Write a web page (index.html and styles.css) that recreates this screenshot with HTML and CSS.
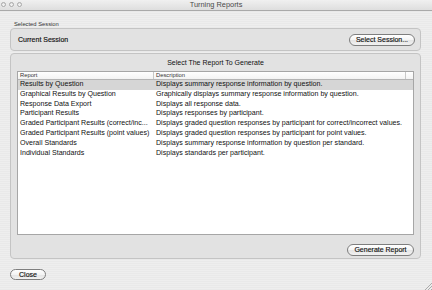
FILE: index.html
```html
<!DOCTYPE html>
<html>
<head>
<meta charset="utf-8">
<link rel="stylesheet" href="styles.css">
</head>
<body>
<div class="window">
  <div class="titlebar">
    <div class="lights">
      <span class="light"></span><span class="light"></span><span class="light"></span>
    </div>
    <div class="title">Turning Reports</div>
  </div>
  <div class="content">
    <div class="group-label">Selected Session</div>
    <div class="box session-box">
      <span class="session-name">Current Session</span>
      <button class="btn">Select Session...</button>
    </div>
    <div class="box report-box">
      <div class="box-title">Select The Report To Generate</div>
      <div class="table">
        <div class="thead">
          <div class="th col-report">Report</div>
          <div class="th col-desc">Description</div>
          <div class="th col-corner"></div>
        </div>
        <div class="tbody">
          <div class="row selected"><div class="col-report">Results by Question</div><div class="col-desc">Displays summary response information by question.</div></div>
          <div class="row"><div class="col-report">Graphical Results by Question</div><div class="col-desc">Graphically displays summary response information by question.</div></div>
          <div class="row"><div class="col-report">Response Data Export</div><div class="col-desc">Displays all response data.</div></div>
          <div class="row"><div class="col-report">Participant Results</div><div class="col-desc">Displays responses by participant.</div></div>
          <div class="row"><div class="col-report">Graded Participant Results (correct/inc...</div><div class="col-desc">Displays graded question responses by participant for correct/incorrect values.</div></div>
          <div class="row"><div class="col-report">Graded Participant Results (point values)</div><div class="col-desc">Displays graded question responses by participant for point values.</div></div>
          <div class="row"><div class="col-report">Overall Standards</div><div class="col-desc">Displays summary response information by question per standard.</div></div>
          <div class="row"><div class="col-report">Individual Standards</div><div class="col-desc">Displays standards per participant.</div></div>
        </div>
      </div>
      <div class="box-footer">
        <button class="btn">Generate Report</button>
      </div>
    </div>
    <div class="footer">
      <button class="btn btn-close">Close</button>
    </div>
  </div>
  <svg class="grip" width="8" height="8" viewBox="0 0 8 8">
    <path d="M8 1 L1 8 M8 4 L4 8 M8 7 L7 8" stroke="#9a9a9a" stroke-width="0.8"/>
  </svg>
</div>
</body>
</html>
```
FILE: styles.css
```css
* { box-sizing: border-box; }
html, body { margin: 0; padding: 0; }
body {
  font-family: "Liberation Sans", Arial, sans-serif;
  color: #111;
  background: #ececec;
  -webkit-font-smoothing: antialiased;
}
.window {
  position: relative;
  width: 432px;
  height: 290px;
  overflow: hidden;
  opacity: 0.999;
  background: repeating-linear-gradient(to bottom, #eeeeee 0, #eeeeee 1px, #e9e9e9 1px, #e9e9e9 2px);
  display: flex;
  flex-direction: column;
}
.titlebar {
  position: relative;
  height: 11px;
  border-bottom: 1px solid #a9a9a9;
  background: linear-gradient(to bottom, #f0f0f0, #dedede);
  display: flex;
  align-items: center;
  justify-content: center;
}
.lights {
  position: absolute;
  left: 1px;
  top: 2px;
  display: flex;
  gap: 3px;
}
.light {
  width: 5px;
  height: 5px;
  border-radius: 50%;
  border: 1px solid #a8a8a8;
  background: linear-gradient(to bottom, #e2e2e2, #fafafa);
}
.title {
  font-size: 7.4px;
  line-height: 10px;
  color: #4a4a4a;
}
.content {
  flex: 1;
  display: flex;
  flex-direction: column;
  padding: 0 11px 0 10px;
}
.group-label {
  margin-top: 9px;
  padding-left: 4px;
  font-size: 5.8px;
  line-height: 8px;
  color: #333;
}
.box {
  border: 1px solid #c4c4c4;
  border-radius: 4px;
  background: #e2e2e2;
}
.session-box {
  height: 23px;
  display: flex;
  align-items: center;
  justify-content: space-between;
  padding: 0 5px 0 7px;
}
.session-name {
  font-size: 7px;
  color: #111;
  -webkit-text-stroke: 0.15px #111;
}
.btn {
  font-family: "Liberation Sans", Arial, sans-serif;
  font-size: 7px;
  color: #111;
  height: 12px;
  padding: 0 6px;
  border: 1px solid #7e7e7e;
  border-radius: 6px;
  background: linear-gradient(to bottom, #ffffff 0%, #f4f4f4 50%, #e4e4e4 51%, #f2f2f2 100%);
  line-height: 10px;
  -webkit-text-stroke: 0.15px #111;
  cursor: default;
}
.session-box .btn { width: 66px; padding: 0; }
.report-box {
  margin-top: 2px;
  height: 206px;
  display: flex;
  flex-direction: column;
  padding: 0 6px;
}
.box-title {
  margin-top: 4px;
  height: 10px;
  line-height: 10px;
  text-align: center;
  font-size: 7px;
  color: #111;
}
.table {
  margin-top: 3px;
  height: 164px;
  background: #fff;
  border: 1px solid #a6a6a6;
  display: flex;
  flex-direction: column;
  font-size: 7.1px;
  color: #111;
}
.thead {
  display: flex;
  height: 8px;
  border-bottom: 1px solid #b4b4b4;
  background: linear-gradient(to bottom, #ffffff, #f3f3f3);
}
.th {
  font-size: 5.8px;
  line-height: 7px;
  color: #333;
  padding-left: 2px;
  border-right: 1px solid #c8c8c8;
}
.thead .col-report { width: 136px; }
.thead .col-desc { flex: 1; }
.thead .col-corner { width: 7px; border-right: none; }
.tbody { flex: 1; }
.row {
  display: flex;
  height: 9.8px;
  line-height: 9.6px;
  white-space: nowrap;
}
.row.selected { background: #d6d6d6; }
.row .col-report { width: 136px; padding-left: 2px; overflow: hidden; }
.row .col-desc { flex: 1; padding-left: 2px; }
.box-footer {
  display: flex;
  justify-content: flex-end;
  margin-top: 9px;
}
.box-footer .btn { width: 67px; padding: 0; }
.footer {
  margin-top: 10px;
  display: flex;
}
.btn-close { width: 36px; height: 11px; padding: 0; line-height: 9px; }
.grip {
  position: absolute;
  right: 0;
  bottom: 0;
}
```
